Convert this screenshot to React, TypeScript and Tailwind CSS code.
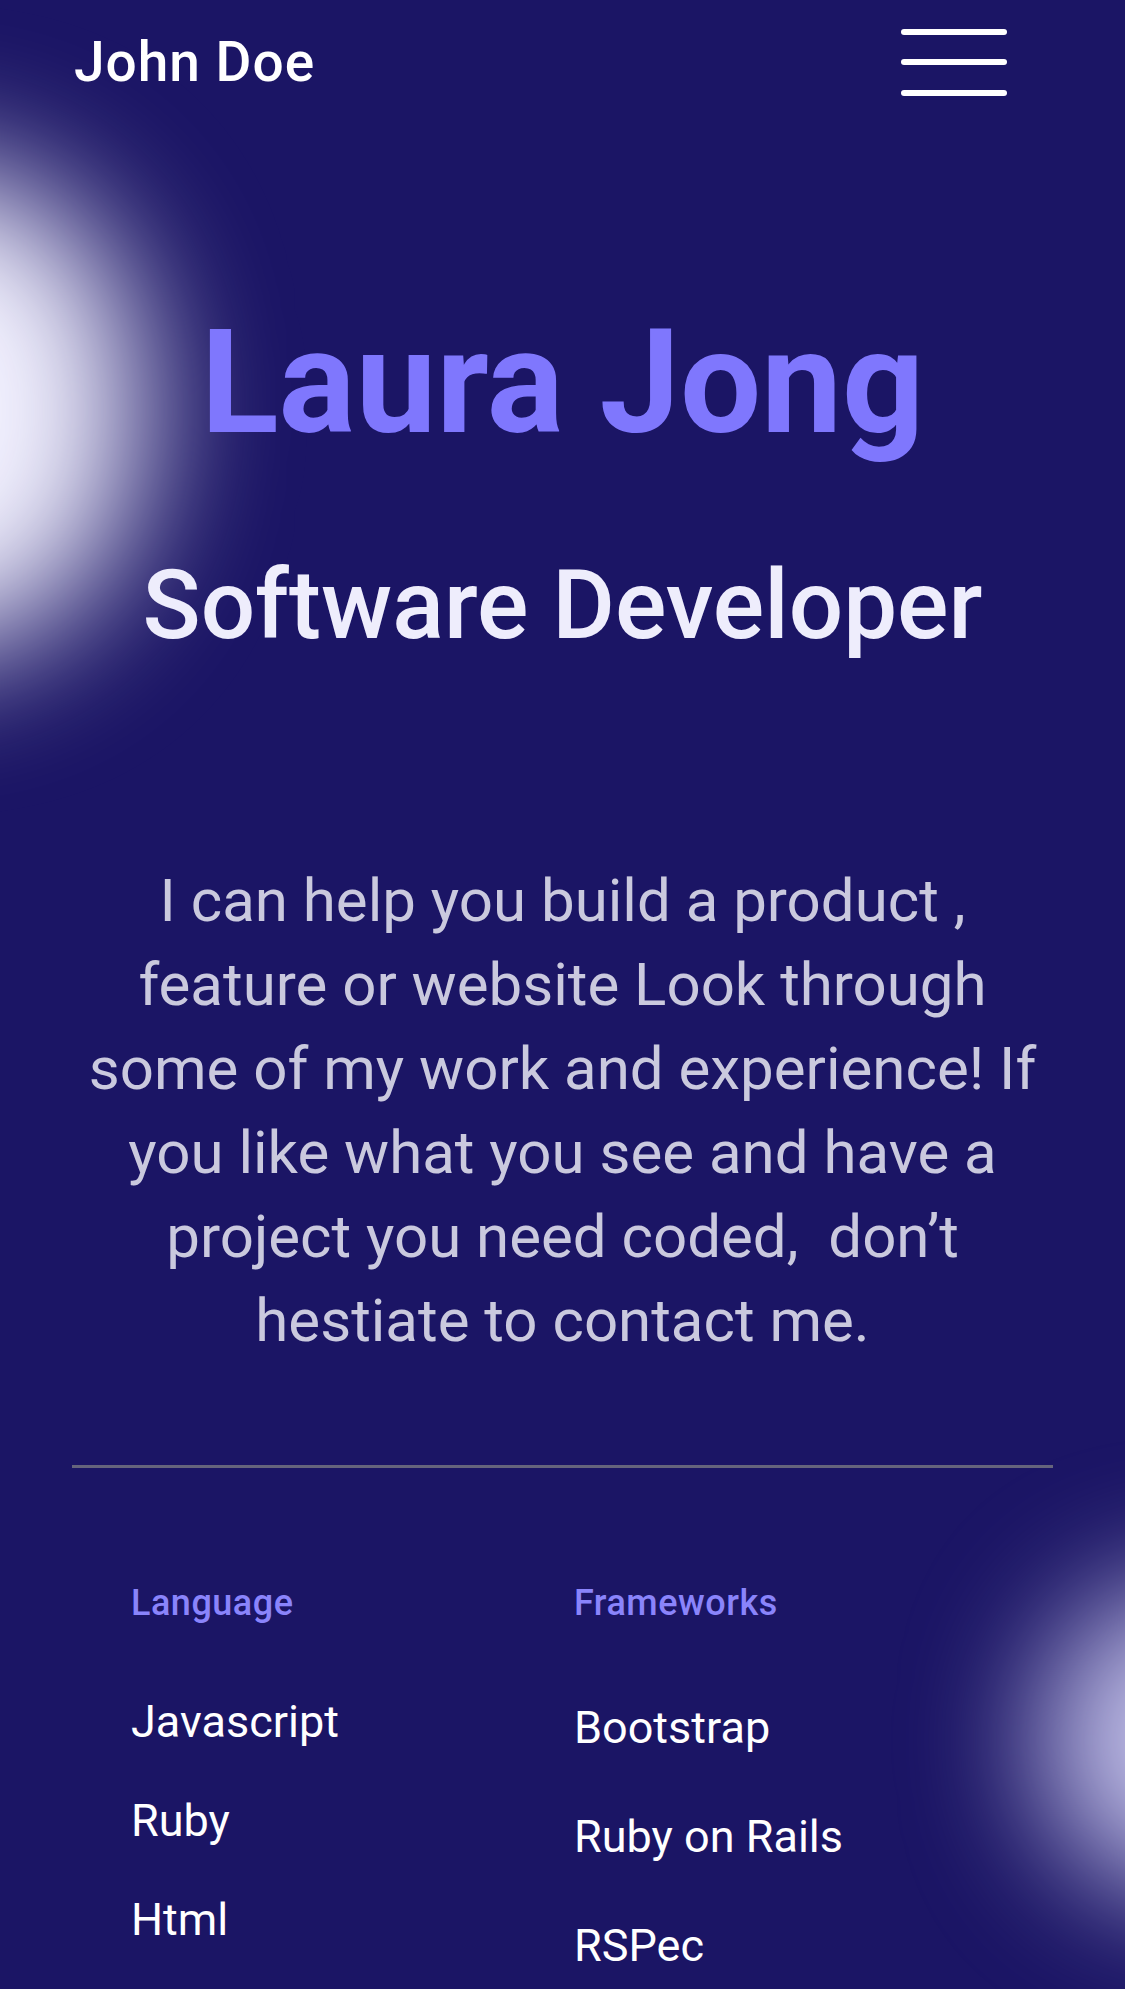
const languages = ["Javascript", "Ruby", "Html"];
const frameworks = ["Bootstrap", "Ruby on Rails", "RSPec"];

const Glow = ({ className }: { className: string }) => (
  <div className={`pointer-events-none absolute rounded-full ${className}`} />
);

const Header = () => (
  <header className="relative z-10 flex h-[124px] items-center justify-between pl-[74px] pr-[118px]">
    <span className="text-[55px] leading-none font-medium tracking-[1px] text-white">John Doe</span>
    <button className="flex h-[69px] w-[106px] flex-col justify-between py-[1px]" aria-label="menu">
      <span className="block h-[6px] w-full rounded-full bg-white" />
      <span className="block h-[6px] w-full rounded-full bg-white" />
      <span className="block h-[6px] w-full rounded-full bg-white" />
    </button>
  </header>
);

const SkillColumn = ({ title, items, gap }: { title: string; items: string[]; gap: string }) => (
  <div className="flex flex-col">
    <h3 className="text-[36px] leading-none font-medium tracking-[0.5px] text-[#8a84fb]">{title}</h3>
    <ul className={`flex flex-col ${gap}`}>
      {items.map((item) => (
        <li key={item} className="text-[45px] leading-none text-white">
          {item}
        </li>
      ))}
    </ul>
  </div>
);

export default function App() {
  return (
    <div className="relative min-h-[1989px] w-full overflow-hidden bg-[#1b1565] font-['Roboto',sans-serif]">
      {/* soft background lights */}
      <Glow className="left-[-300px] top-[165px] h-[490px] w-[440px] bg-[#f3f2ff] blur-[70px]" />
      <Glow className="left-[1040px] top-[1585px] h-[310px] w-[310px] bg-[#c4c2ea] blur-[65px]" />

      <Header />

      <main className="relative z-10 px-[72px]">
        <section className="flex flex-col items-center text-center">
          <h1 className="mt-[187px] text-[144px] leading-none font-bold text-[#7f77fd]">Laura Jong</h1>
          <h2 className="mt-[102px] text-[96px] leading-none font-medium text-[#eeedfc]">Software Developer</h2>
          <p className="mt-[206px] w-full text-[60px] leading-[84px] text-[#cac9de]">
            I can help you build a product , feature or website Look through some of my work and experience! If
            you like what you see and have a project you need coded,{"\u00a0"} don’t hestiate to contact me.
          </p>
        </section>

        <hr className="mt-[102px] h-[3px] border-0 bg-[#65647c]" />

        <section className="flex pl-[59px] pt-[117px]">
          <div className="w-[443px]">
            <SkillColumn title="Language" items={languages} gap="mt-[78px] gap-[54px]" />
          </div>
          <SkillColumn title="Frameworks" items={frameworks} gap="mt-[84px] gap-[64px]" />
        </section>
      </main>
    </div>
  );
}
